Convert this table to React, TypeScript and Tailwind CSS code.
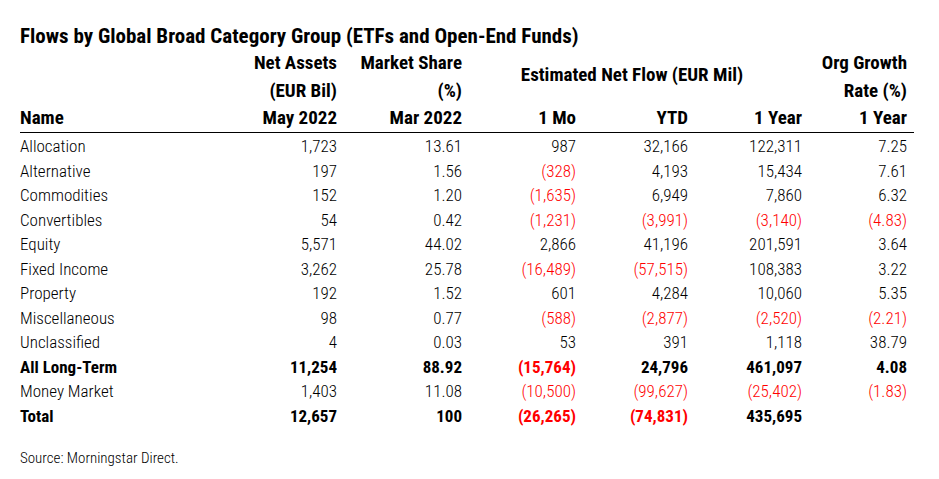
import React from "react";

type Row = {
  name: string;
  assets: string;
  share: string;
  mo: string;
  ytd: string;
  year: string;
  org: string;
  bold?: boolean;
};

const ROWS: Row[] = [
  { name: "Allocation", assets: "1,723", share: "13.61", mo: "987", ytd: "32,166", year: "122,311", org: "7.25" },
  { name: "Alternative", assets: "197", share: "1.56", mo: "(328)", ytd: "4,193", year: "15,434", org: "7.61" },
  { name: "Commodities", assets: "152", share: "1.20", mo: "(1,635)", ytd: "6,949", year: "7,860", org: "6.32" },
  { name: "Convertibles", assets: "54", share: "0.42", mo: "(1,231)", ytd: "(3,991)", year: "(3,140)", org: "(4.83)" },
  { name: "Equity", assets: "5,571", share: "44.02", mo: "2,866", ytd: "41,196", year: "201,591", org: "3.64" },
  { name: "Fixed Income", assets: "3,262", share: "25.78", mo: "(16,489)", ytd: "(57,515)", year: "108,383", org: "3.22" },
  { name: "Property", assets: "192", share: "1.52", mo: "601", ytd: "4,284", year: "10,060", org: "5.35" },
  { name: "Miscellaneous", assets: "98", share: "0.77", mo: "(588)", ytd: "(2,877)", year: "(2,520)", org: "(2.21)" },
  { name: "Unclassified", assets: "4", share: "0.03", mo: "53", ytd: "391", year: "1,118", org: "38.79" },
  { name: "All Long-Term", assets: "11,254", share: "88.92", mo: "(15,764)", ytd: "24,796", year: "461,097", org: "4.08", bold: true },
  { name: "Money Market", assets: "1,403", share: "11.08", mo: "(10,500)", ytd: "(99,627)", year: "(25,402)", org: "(1.83)" },
  { name: "Total", assets: "12,657", share: "100", mo: "(26,265)", ytd: "(74,831)", year: "435,695", org: "", bold: true },
];

const GRID = "grid grid-cols-[200px_117px_125px_114px_112px_114px_105px]";

function Num({ v }: { v: string }) {
  // negatives shown in red parentheses
  const neg = v.startsWith("(");
  return <div className={`text-right ${neg ? "text-[#ff0000]" : ""}`}>{v}</div>;
}

export default function App() {
  return (
    <div
      className="w-[939px] h-[479px] bg-white text-black pl-[20px] pt-[23px]"
      style={{ fontFamily: "'Liberation Sans Narrow', 'Roboto Condensed', 'DejaVu Sans Condensed', sans-serif" }}
    >
      <h1 className="text-[21px] leading-[26px] font-bold">
        Flows by Global Broad Category Group (ETFs and Open-End Funds)
      </h1>

      <div className="w-[894px] text-[17px]">
        {/* Header */}
        <div className={`${GRID} grid-rows-[27.5px_27.5px_27.5px] text-[19px] font-bold leading-[27.5px] border-b-[1.5px] border-black`}>
          <div className="col-start-2 row-start-1 text-right">Net Assets</div>
          <div className="col-start-3 row-start-1 text-right">Market Share</div>
          <div className="col-start-4 col-span-3 row-start-1 row-span-2 flex items-center justify-center pb-[4px]">
            Estimated Net Flow (EUR Mil)
          </div>
          <div className="col-start-7 row-start-1 text-right">Org Growth</div>
          <div className="col-start-2 row-start-2 text-right">(EUR Bil)</div>
          <div className="col-start-3 row-start-2 text-right">(%)</div>
          <div className="col-start-7 row-start-2 text-right">Rate (%)</div>
          <div className="col-start-1 row-start-3">Name</div>
          <div className="col-start-2 row-start-3 text-right">May 2022</div>
          <div className="col-start-3 row-start-3 text-right">Mar 2022</div>
          <div className="col-start-4 row-start-3 text-right">1 Mo</div>
          <div className="col-start-5 row-start-3 text-right">YTD</div>
          <div className="col-start-6 row-start-3 text-right">1 Year</div>
          <div className="col-start-7 row-start-3 text-right">1 Year</div>
        </div>

        {/* Body */}
        <div className="pt-[1.5px]">
          {ROWS.map((r) => (
            <div key={r.name} className={`${GRID} h-[24.5px] leading-[24.5px] ${r.bold ? "font-bold" : "font-light"}`}>
              <div>{r.name}</div>
              <Num v={r.assets} />
              <Num v={r.share} />
              <Num v={r.mo} />
              <Num v={r.ytd} />
              <Num v={r.year} />
              <Num v={r.org} />
            </div>
          ))}
        </div>
      </div>

      <p className="mt-[21px] text-[15px] leading-[18px] font-light">Source: Morningstar Direct.</p>
    </div>
  );
}
